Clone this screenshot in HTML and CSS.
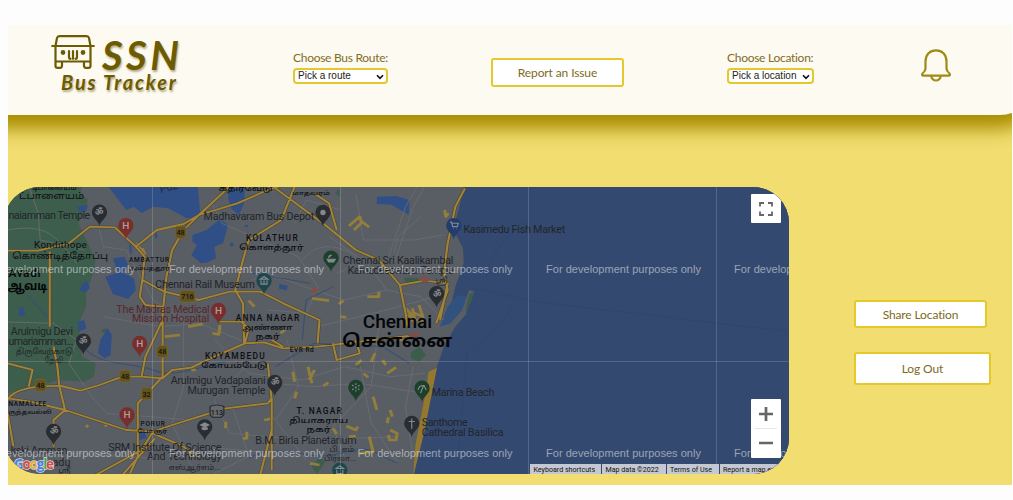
FILE: index.html
```html
<!DOCTYPE html>
<html lang="en">
<head>
<meta charset="utf-8">
<title>SSN Bus Tracker</title>
<link rel="stylesheet" href="styles.css">
</head>
<body>
<div class="page">
  <header class="header">
    <div class="logo">
      <div class="logo-top">
        <svg class="bus" viewBox="0 0 44 34" fill="none" stroke="#6d5b02" stroke-width="2.200" stroke-linecap="round" stroke-linejoin="round">
          <path d="M4.500 11 6 3Q6.500 1.200 8.500 1.200h27q2 0 2.500 1.800l1.500 8M1.200 11h41.600M4.500 11v20q0 1.800 2 1.800h2.500q2 0 2-2v-4.300h22v4.300q0 2 2 2h2.500q2 0 2-1.800V11M4.500 26.500h35M18 16v6q0 1.800 1.500 1.800M22 16v7.800M26 16v6q0 1.800-1.500 1.800"/>
          <circle cx="12" cy="17.500" r="1.300" fill="#6d5b02"/><circle cx="32" cy="17.500" r="1.300" fill="#6d5b02"/>
        </svg>
        <span class="logo-ssn">SSN</span>
      </div>
      <span class="logo-sub">Bus Tracker</span>
    </div>
    <div class="field">
      <label for="route">Choose Bus Route:</label>
      <div class="picker route">
        <select id="route"><option>Pick a route</option></select>
        <svg class="chevron" viewBox="0 0 8 6" fill="none" stroke="#111" stroke-width="1.600"><path d="M1 1.200 4 4.300 7 1.200"/></svg>
      </div>
    </div>
    <button class="btn">Report an Issue</button>
    <div class="field">
      <label for="place">Choose Location:</label>
      <div class="picker place">
        <select id="place"><option>Pick a location</option></select>
        <svg class="chevron" viewBox="0 0 8 6" fill="none" stroke="#111" stroke-width="1.600"><path d="M1 1.200 4 4.300 7 1.200"/></svg>
      </div>
    </div>
    <svg class="bell" viewBox="0 0 30 33" fill="none" stroke="#a08a17" stroke-width="2.200" stroke-linejoin="round">
      <path d="M4.500 12.500C4.500 5.500 9 1.300 15 1.300S25.500 5.500 25.500 12.500V19.500q0 2.500 3 5 1.200 2.200-1 2.200H2.500q-2.200 0-1-2.200 3-2.500 3-5ZM10 27q1.500 4.500 5 4.500t5-4.500"/>
    </svg>
  </header>
  <main class="main">
    <section class="map">
      <svg class="tiles" viewBox="4 187 784.500 287">
        <defs>
          <path id="pin" d="M0 36C-3 21-20 15-20 0A20 20 0 1 1 20 0C20 15 3 21 0 36Z"/>
          <path id="roads" d="M20 212H100L180 190 235 140 300 142 355 200 410 150 480 132 520 105 620 70 700 30 740 15M355 200 378 230 372 300 430 335 520 360 600 335 680 335 740 370 835 420 830 490M600 20 520 105 480 150 450 210 435 290 425 400 425 590M770 20 735 120 650 180 635 240 615 330 635 370 638 490M720 25 850 135 930 210 990 240 1045 315 1060 400 1065 440M820 40 860 70 880 150M1215 25 1190 80 1170 190 1160 280 1170 330 1140 430M1045 315 1110 302 1170 310 1150 420M372 300 365 350 380 375 425 380M130 215V440M425 420 380 530 370 590M570 425 630 425M20 550 85 570 75 620M20 660Q40 615 160 618L210 632 260 615 320 590 370 590 425 595 450 570 500 563 560 530 640 490 690 487 740 505 830 500 940 485 1090 465M870 490 880 540 940 520 930 480M155 618 150 560 140 500M155 618 170 690 140 720 140 800M20 700 35 800M20 655 80 665 170 690 330 750 400 755 450 735 520 710 590 685 700 670 710 655 710 870M425 590 360 670 360 830 340 880M400 755 370 810 250 885M400 760 480 800 510 830M700 550 710 660M710 750 680 885M320 885 405 775M630 425 650 445 640 490M740 500 710 480"/>
        </defs>
        <rect x="0" y="180" width="800" height="300" fill="#595d64"/>
        <g transform="translate(0 180) scale(.38265 .33333)">
          <path fill="#3d5e4c" d="M0 0H220L210 40 230 60 205 130 225 180 250 240 240 290 225 340 225 380 205 430 210 480 215 530 250 550 245 590 220 605 150 600 60 635 0 640Z"/>
          <path d="M1218 0 1198 90 1185 150 1210 205 1212 250 1190 320 1180 370 1220 400 1190 440 1160 500 1142 560 1120 660 1100 760 1085 850 1080 900H2200V0Z" fill="#34496f"/>
          <path d="M1170 380 1195 345 1226 352 1210 400 1178 430 1150 440Z" fill="#31527f"/>
          <path fill="#595d64" d="M1226 330 1240 335 1215 405 1180 445 1170 440 1208 390Z"/>
          <path fill="#3b5d4b" d="M1226 345 1238 335 1230 370 1215 392ZM1075 515l22-15 16 24-18 22-22-12ZM815 860l20-28 15 15-22 35ZM1055 293h35l12 12-40 5ZM875 40l12-15v25ZM930 555l10-8 6 10-12 6ZM265 450l12-5 3 10-12 3Z"/>
          <g fill="#304f86">
            <path d="M270 0H516L523 100 505 113 488 115 440 85 400 80 370 100 350 80 330 90 300 45ZM503 165 540 150 575 118 596 135 583 190 560 200 565 235 540 248 525 250 500 225 515 195 503 185ZM985 50l50-2 35 12-2 44-45-30-38-2ZM600 25h40l-2 45-14 35-20-20-8-30ZM275 290l40-15 35 20 5 35-20 27-40-15ZM295 235l30-5 10 25-15 22-15-10ZM200 80l30-6-5 20-15 3ZM215 312l12-10 8 22-12 12-15-5ZM50 385l10-6 6 26-16 4ZM203 425l17-5 6 25-20 10ZM262 480l20-35 10 20-3 60-15 10-18-15ZM730 312l22 5-3 14-20-5ZM360 760l16-10 8 25-20 5ZM405 165l3-12 4 15-6 8ZM338 195l3-15 4 35-5 10ZM600 190l8-3 3 10-9 3ZM640 135h8v6h-8Z"/>
          </g>
          <g fill="none" stroke="#6a6d74" stroke-width="2.400">
            <path d="M70 0 100 100 105 180 220 210M260 150 270 200 330 210 400 360 480 420 480 620 450 730 500 860M0 425 140 430 200 480 180 550 240 650 280 700 500 720M550 60 580 130 700 190 780 230 830 320 800 400 700 390M1010 250 1060 80 1100 0M1030 250 1080 80 1120 0M930 40 950 180 1080 180 1160 165M860 170 960 250 1010 330 1100 350 1160 420M660 300 700 280 820 330 900 360 1010 330M560 480 650 580 790 600 900 560 1020 590 1110 580M750 480 780 620 720 720 800 840M940 550 970 730 1040 850M990 440 970 620 870 740 900 830M1080 560 1060 680 1080 830M710 610 820 620 940 610 1110 640M270 410 420 440 520 430 650 490M640 560 560 660 600 760 800 780 1040 770M610 690 650 830 560 880M1100 110 1040 170 1030 220M830 440 1010 390 1140 350M430 790 720 820M50 810 400 835M20 150Q110 130 150 180T200 250M770 130 800 60 890 90M790 240Q830 180 900 210T880 280"/>
          </g>
          <g fill="none" stroke="#365077" stroke-width="3">
            <path d="M75 350 130 420M205 480C250 570 340 540 400 570S540 550 590 545M650 835C740 780 800 850 890 820S970 820 1040 850M790 480 800 360 870 320M660 280Q760 300 810 310M720 560 820 490 1000 500 1070 550"/>
          </g>
          <g fill="none" stroke="#937d3a" stroke-width="8" stroke-linejoin="round">
            <path d="M355 190 378 222 372 205M912 138 940 110 945 128 925 150M940 120 965 142M815 355 860 362M885 372 898 362M960 350 990 350 990 335M1162 90 1165 110 1172 100M430 470 470 465M492 440 530 432M575 435 572 463 555 460M650 362 665 380M733 460 745 450M805 560 815 610M822 570 808 600M765 575 770 605M845 618 858 608M770 655 775 635M645 755 645 775 635 775M590 725 590 745M810 850 835 855M870 745 880 762M905 738 930 750 935 740M912 770 930 768M965 770 975 815 940 820M1020 750 1038 760 1035 780 1018 780 1015 765M950 580 962 592M970 545 980 520M975 650 985 690M1012 580 1035 562M1000 540 1008 555M1060 385 1080 410 1060 405M1078 385 1085 425M1095 375 1105 410 1085 400 1070 420 1110 420M500 570 512 570M230 735 225 742M280 730 275 740M690 720 715 715M1012 730 1015 712M930 555 945 540M890 410 905 412M1035 480 1055 480M1020 690 1025 710"/>
          </g>
          <path d="M1120 575 1142 563 1108 760 1080 890 1085 800 1110 650Z" fill="#94782e"/>
          <g fill="none" stroke-linejoin="round">
            <use href="#roads" stroke="#4a432f" stroke-width="8.500"/>
            <use href="#roads" stroke="#a18439" stroke-width="5.500"/>
          </g>
          <g fill="none" stroke="#304569" stroke-width="2"><path d="M1390 110Q1280 200 1270 290M1340 380Q1310 440 1220 520L1195 860M1235 325 1400 365 2100 460"/></g>
          <g fill="#864b46"><circle cx="822" cy="332" r="8"/><path d="M1095 298l15-10 15 13-15 8ZM1065 465l25-8 8 10-25 5Z"/></g>
        </g>
        <g transform="translate(0 180) scale(.38265)">
          <g fill="#292c31">
            <use href="#pin" x="260" y="84"/><use href="#pin" x="844" y="85"/><use href="#pin" x="218" y="421"/><use href="#pin" x="140" y="657"/><use href="#pin" x="718" y="529"/><use href="#pin" x="535" y="645"/><use href="#pin" x="1141" y="297"/><use href="#pin" x="1076" y="636"/>
          </g>
          <g fill="#792e2c"><use href="#pin" x="329" y="119"/><use href="#pin" x="571" y="341"/><use href="#pin" x="365" y="427"/><use href="#pin" x="332" y="614"/></g>
          <g fill="#1d402d"><use href="#pin" x="865" y="204"/><use href="#pin" x="930" y="542"/><use href="#pin" x="1103" y="544"/></g>
          <g fill="#1d474c"><use href="#pin" x="690" y="263"/><use href="#pin" x="888" y="758"/></g>
          <use href="#pin" x="1186" y="119" fill="#233c6e"/>
          <g class="om"><text x="260" y="92">ॐ</text><text x="218" y="429">ॐ</text><text x="140" y="665">ॐ</text><text x="718" y="537">ॐ</text><text x="1141" y="305">ॐ</text></g>
          <g class="hosp"><text x="329" y="128">H</text><text x="571" y="350">H</text><text x="365" y="436">H</text><text x="332" y="623">H</text></g>
          <circle cx="844" cy="85" r="7" fill="#85888c"/>
          <g fill="none" stroke="#858a8d" stroke-width="3">
            <path d="M1076 623v27M1068 631h16"/>
            <path d="M680 259l10-7 10 7ZM682 262v10h16v-10M690 262v10"/>
            <path d="M878 754l10-7 10 7ZM880 757v10h16v-10"/>
            <path d="M1176 110h4l3 12h12l3-9h-16M1184 127h1M1193 127h1"/>
            <path d="M1093 549q0-12 15-12l6 12M1107 537l-8 20"/>
            <path d="M855 207h21l-4 7h-13ZM859 204q0-9 8-7" fill="#858a8d"/>
            <path d="M930 531v22M920 536l20 12M920 548l20-12" stroke-dasharray="5 4"/>
          </g>
          <path d="M521 640l14-7 14 7-14 7ZM527 646v6q8 4 16 0v-6" fill="#858a8d"/>
          <g class="shield">
            <rect x="458" y="121" width="28" height="31" rx="6"/><rect x="470" y="289" width="40" height="30" rx="6"/><rect x="410" y="433" width="28" height="31" rx="6"/><rect x="313" y="497" width="28" height="31" rx="6"/><rect x="92" y="521" width="28" height="31" rx="6"/><rect x="369" y="543" width="28" height="31" rx="6"/>
            <text x="472" y="144">48</text><text x="490" y="311">716</text><text x="424" y="456">48</text><text x="327" y="520">48</text><text x="106" y="544">48</text><text x="383" y="566">32</text>
          </g>
          <path d="M549 592q18-8 36 0v21l-6 7h-24l-6-7Z" fill="#666a70" stroke="#25272a" stroke-width="3"/>
          <text x="567" y="613" class="tiny">113</text>
          <g class="poi">
            <text x="22" y="102" textLength="214">naiamman Temple</text>
            <text x="532" y="104" textLength="289">Madhavaram Bus Depot</text>
            <text x="406" y="281" textLength="260">Chennai Rail Museum</text>
            <text x="896" y="220" textLength="289">Chennai Sri Kaalikambal</text>
            <text x="908" y="246" textLength="277">Kamadeeswarar Temple</text>
            <text x="28" y="406" textLength="163">Arulmigu Devi</text>
            <text x="22" y="431" textLength="170">umariamman...</text>
            <g class="ta">
              <text x="41" y="455" textLength="150" lengthAdjust="spacingAndGlyphs">திருவேற்காடு</text>
              <text x="117" y="477" textLength="62" lengthAdjust="spacingAndGlyphs">தேவி...</text>
              <text x="441" y="757" textLength="136" lengthAdjust="spacingAndGlyphs">எஸ்ஆர்எம்...</text>
              <text x="861" y="712" textLength="70" lengthAdjust="spacingAndGlyphs">பி. எம்.</text>
              <text x="847" y="735" textLength="84" lengthAdjust="spacingAndGlyphs">பிர்லா...</text>
              <text x="152" y="766" textLength="32" lengthAdjust="spacingAndGlyphs">ஸ்ரீ</text>
              <text x="1139" y="268" textLength="30" lengthAdjust="spacingAndGlyphs">ஸ்ரீ</text>
            </g>
            <text x="446" y="534" textLength="248">Arulmigu Vadapalani</text>
            <text x="490" y="559" textLength="204">Murugan Temple</text>
            <text x="283" y="707" textLength="296">SRM Institute Of Science</text>
            <text x="384" y="733" textLength="195">And Technology</text>
            <text x="667" y="690" textLength="265">B.M. Birla Planetarium</text>
            <text x="28" y="716" textLength="148">kski Amman</text>
            <text x="137" y="747" textLength="47">adu</text>
            <text x="1128" y="564" textLength="164">Marina Beach</text>
            <text x="1102" y="642" textLength="120">Santhome</text>
            <text x="1102" y="668" textLength="214">Cathedral Basilica</text>
            <text x="1211" y="138" textLength="266">Kasimedu Fish Market</text>
            <text x="420" y="34" transform="rotate(-14 420 34)" fill="#1a2949">Puz</text>
            <g fill="#5a2729"><text x="304" y="347" textLength="244">The Madras Medical</text><text x="345" y="372" textLength="202">Mission Hospital</text></g>
          </g>
          <g class="area">
            <text x="89" y="179" textLength="138" class="town">Kondithope</text>
            <text x="643" y="159" textLength="135">KOLATHUR</text>
            <text x="337" y="214" textLength="105" class="small">AMBATTUR</text>
            <text x="616" y="368" textLength="166">ANNA NAGAR</text>
            <text x="536" y="467" textLength="156">KOYAMBEDU</text>
            <text x="775" y="611" textLength="118">T. NAGAR</text>
            <text x="367" y="642" textLength="64" class="small">PORUR</text>
            <text x="22" y="591" textLength="99" class="small">NAMALLEE</text>
            <text x="757" y="449" textLength="63" class="small">EVR Rd</text>
            <g class="area-ta">
              <text x="32" y="207" textLength="250" lengthAdjust="spacingAndGlyphs" class="town">கொண்டித்தோப்பு</text>
              <text x="84" y="25" textLength="116" lengthAdjust="spacingAndGlyphs">டிபாளையம்</text>
              <text x="50" y="50" textLength="170" lengthAdjust="spacingAndGlyphs" class="town">ட்பாளையம்</text>
              <text x="572" y="29" textLength="140" lengthAdjust="spacingAndGlyphs">கதிர்வேடு</text>
              <text x="764" y="38" textLength="98" lengthAdjust="spacingAndGlyphs" class="small">மாதவரம்</text>
              <text x="625" y="184" textLength="168" lengthAdjust="spacingAndGlyphs">கொளத்தூர்</text>
              <text x="337" y="234" textLength="107" lengthAdjust="spacingAndGlyphs" class="small">அம்பத்தூர்</text>
              <text x="634" y="392" textLength="131" lengthAdjust="spacingAndGlyphs">அண்ணா</text>
              <text x="668" y="415" textLength="63" lengthAdjust="spacingAndGlyphs">நகர்</text>
              <text x="526" y="491" textLength="173" lengthAdjust="spacingAndGlyphs">கோயம்பேடு</text>
              <text x="756" y="635" textLength="154" lengthAdjust="spacingAndGlyphs">தியாகராய</text>
              <text x="801" y="658" textLength="63" lengthAdjust="spacingAndGlyphs">நகர்</text>
              <text x="359" y="662" textLength="78" lengthAdjust="spacingAndGlyphs" class="small">போரூர்</text>
              <text x="22" y="611" textLength="113" lengthAdjust="spacingAndGlyphs" class="small">ருந்தவல்லி</text>
            </g>
          </g>
          <g class="city">
            <text x="22" y="253" textLength="84" class="mid">Avadi</text>
            <text x="20" y="288" textLength="104" lengthAdjust="spacingAndGlyphs" class="mid ta-bold">ஆவடி</text>
            <text x="948" y="387" textLength="181">Chennai</text>
            <text x="894" y="436" textLength="288" lengthAdjust="spacingAndGlyphs" class="city-ta ta-bold">சென்னை</text>
          </g>
        </g>
        <path d="M152.500 187V474M340.500 187V474M528.500 187V474M716.500 187V474M0 361.500H790" stroke="#fff" stroke-opacity=".16" fill="none"/>
        <g class="mark">
          <text x="-20" y="273" textLength="155">For development purposes only</text><text x="169" y="273" textLength="155">For development purposes only</text><text x="357.500" y="273" textLength="155">For development purposes only</text><text x="546" y="273" textLength="155">For development purposes only</text><text x="734" y="273" textLength="155">For development purposes only</text>
          <text x="-20" y="457" textLength="155">For development purposes only</text><text x="169" y="457" textLength="155">For development purposes only</text><text x="357.500" y="457" textLength="155">For development purposes only</text><text x="546" y="457" textLength="155">For development purposes only</text><text x="734" y="457" textLength="155">For development purposes only</text>
        </g>
        <text class="google" x="14" y="469" textLength="40"><tspan fill="#4a7fe0">G</tspan><tspan fill="#dc4a3d">o</tspan><tspan fill="#e8b52a">o</tspan><tspan fill="#4a7fe0">g</tspan><tspan fill="#3ea45a">l</tspan><tspan fill="#dc4a3d">e</tspan></text>
      </svg>
      <div class="fullscreen">
        <svg width="14" height="14" viewBox="0 0 14 14" fill="none" stroke="#666" stroke-width="1.800"><path d="M1 4.500V1h4M9 1h4v3.500M13 9.500V13H9M5 13H1V9.500"/></svg>
      </div>
      <div class="zoom">
        <svg width="14" height="14" viewBox="0 0 14 14" stroke="#666" stroke-width="2.700"><path d="M0 7h14M7 0v14"/></svg>
        <i></i>
        <svg width="14" height="14" viewBox="0 0 14 14" stroke="#666" stroke-width="2.700"><path d="M0 7h14"/></svg>
      </div>
      <div class="credits"><span>Keyboard shortcuts</span><span>Map data ©2022</span><span>Terms of Use</span><span>Report a map error</span></div>
    </section>
    <aside class="actions">
      <button class="btn">Share Location</button>
      <button class="btn btn-out">Log Out</button>
    </aside>
  </main>
</div>
</body>
</html>
```
FILE: styles.css
```css
* { box-sizing: border-box; }
body { margin: 0; background: #fdfdfd; padding: 25px 1px 0 8px; height: 500px; overflow: hidden; }
.page { height: 460px; background: #f1dd70; overflow: hidden; }
.header {
  width: 1058px; height: 90px; margin-left: -30px; padding-left: 73px; background: #fdfaf1;
  border-radius: 0 0 36px 0; box-shadow: 0 14px 18px #a98d00;
  display: grid; grid-template-columns: 242px 198px 236px 194px auto; align-items: start;
}
.logo { padding-top: 10px; height: 90px; color: #6d5b02; display: flex; flex-direction: column; font-family: "Lato", sans-serif; font-style: italic; text-shadow: 1px 2px 2px #b8ae8c; }
.logo-top { display: flex; gap: 7px; height: 34px; align-items: flex-end; }
.bus { width: 44px; height: 34px; }
.logo-ssn { font-size: 40px; line-height: 28px; font-weight: 700; letter-spacing: 3.500px; }
.logo-sub { font-size: 20px; line-height: 26px; font-weight: 700; letter-spacing: 1.800px; padding-left: 10px; }
.field { padding-top: 25px; display: flex; flex-direction: column; align-items: flex-start; font: 12px/15px "Lato", sans-serif; letter-spacing: -.28px; color: #7f6c1f; }
.field label { white-space: nowrap; height: 18px; }
.picker { position: relative; height: 16px; }
.picker select { display: block; width: 100%; height: 16px; margin: 0; padding: 0 0 0 3px; appearance: none; border: 2px solid #e5c82c; border-radius: 4px; background: #fff; color: #222; font: 10px/12px "Liberation Sans", Arial, sans-serif; letter-spacing: 0; }
.chevron { position: absolute; right: 4px; top: 6px; width: 8px; height: 6px; }
.route { width: 95px; }
.place { width: 87px; }
.btn { width: 133px; height: 29px; margin-top: 33px; padding: 0; border: 2px solid #e5c82c; border-radius: 3px; background: #fff; color: #7d6a20; font: 12px/15px "Lato", sans-serif; letter-spacing: -.12px; }
.bell { width: 30px; height: 33px; margin-top: 24px; }
.main { display: flex; padding-top: 72px; }
.map { position: relative; flex: none; width: 784.500px; height: 287px; margin-left: -4px; border-radius: 36px; overflow: hidden; background: #34496f; }
.tiles { display: block; width: 784.500px; height: 287px; font-family: "Roboto", "Noto Sans Tamil", sans-serif; }
.poi { font-size: 28px; fill: #222529; }
.ta { font-size: 20px; }
.area { font-size: 22px; font-weight: 500; fill: #0d0f12; }
.area-ta { font-size: 20px; }
.area .town { font-size: 26px; font-weight: 400; }
.area-ta .town { font-size: 24px; }
.area .small { font-size: 17px; }
.area-ta .small { font-size: 15px; }
.city { font-size: 50px; font-weight: 500; fill: #050608; }
.city .city-ta { font-size: 46px; }
.city .mid { font-size: 31px; }
.ta-bold { font-weight: 700; }
.om { font-size: 24px; fill: #85888c; text-anchor: middle; font-weight: 700; }
.hosp { font-size: 26px; fill: #aaa0a0; text-anchor: middle; font-weight: 500; }
.shield rect { fill: #62521f; stroke: #7a672d; stroke-width: 2; }
.shield text, .tiny { font-size: 19px; font-weight: 500; text-anchor: middle; fill: #15130c; }
.mark { font: 11px "Liberation Sans", sans-serif; fill: #fff; fill-opacity: .5; }
.google { font: 700 13.500px "Open Sans", sans-serif; stroke: #d5d7db; stroke-width: 1.500px; paint-order: stroke; }
.fullscreen { position: absolute; right: 8px; top: 7px; width: 29.500px; height: 29px; background: #fff; border-radius: 1px; display: flex; align-items: center; justify-content: center; }
.zoom { position: absolute; right: 8px; top: 212px; width: 29.500px; height: 59px; background: #fff; border-radius: 1px; display: flex; flex-direction: column; align-items: center; justify-content: space-between; padding: 8px 0; }
.zoom i { width: 23px; height: 1px; background: #e6e6e6; }
.credits { position: absolute; left: 526px; right: 0; bottom: 0; height: 10px; display: grid; grid-template-columns: 71px 63.500px 52px 1fr; gap: 1px; font: 7.100px/11px "Roboto", sans-serif; color: #111; white-space: nowrap; }
.credits span { background: #c3c8d2; padding-left: 3.500px; }
.actions { margin-left: 65.500px; padding-top: 113px; display: flex; flex-direction: column; gap: 24px; }
.actions .btn { margin: 0; height: 28px; }
.actions .btn-out { width: 137px; height: 33px; }
```
